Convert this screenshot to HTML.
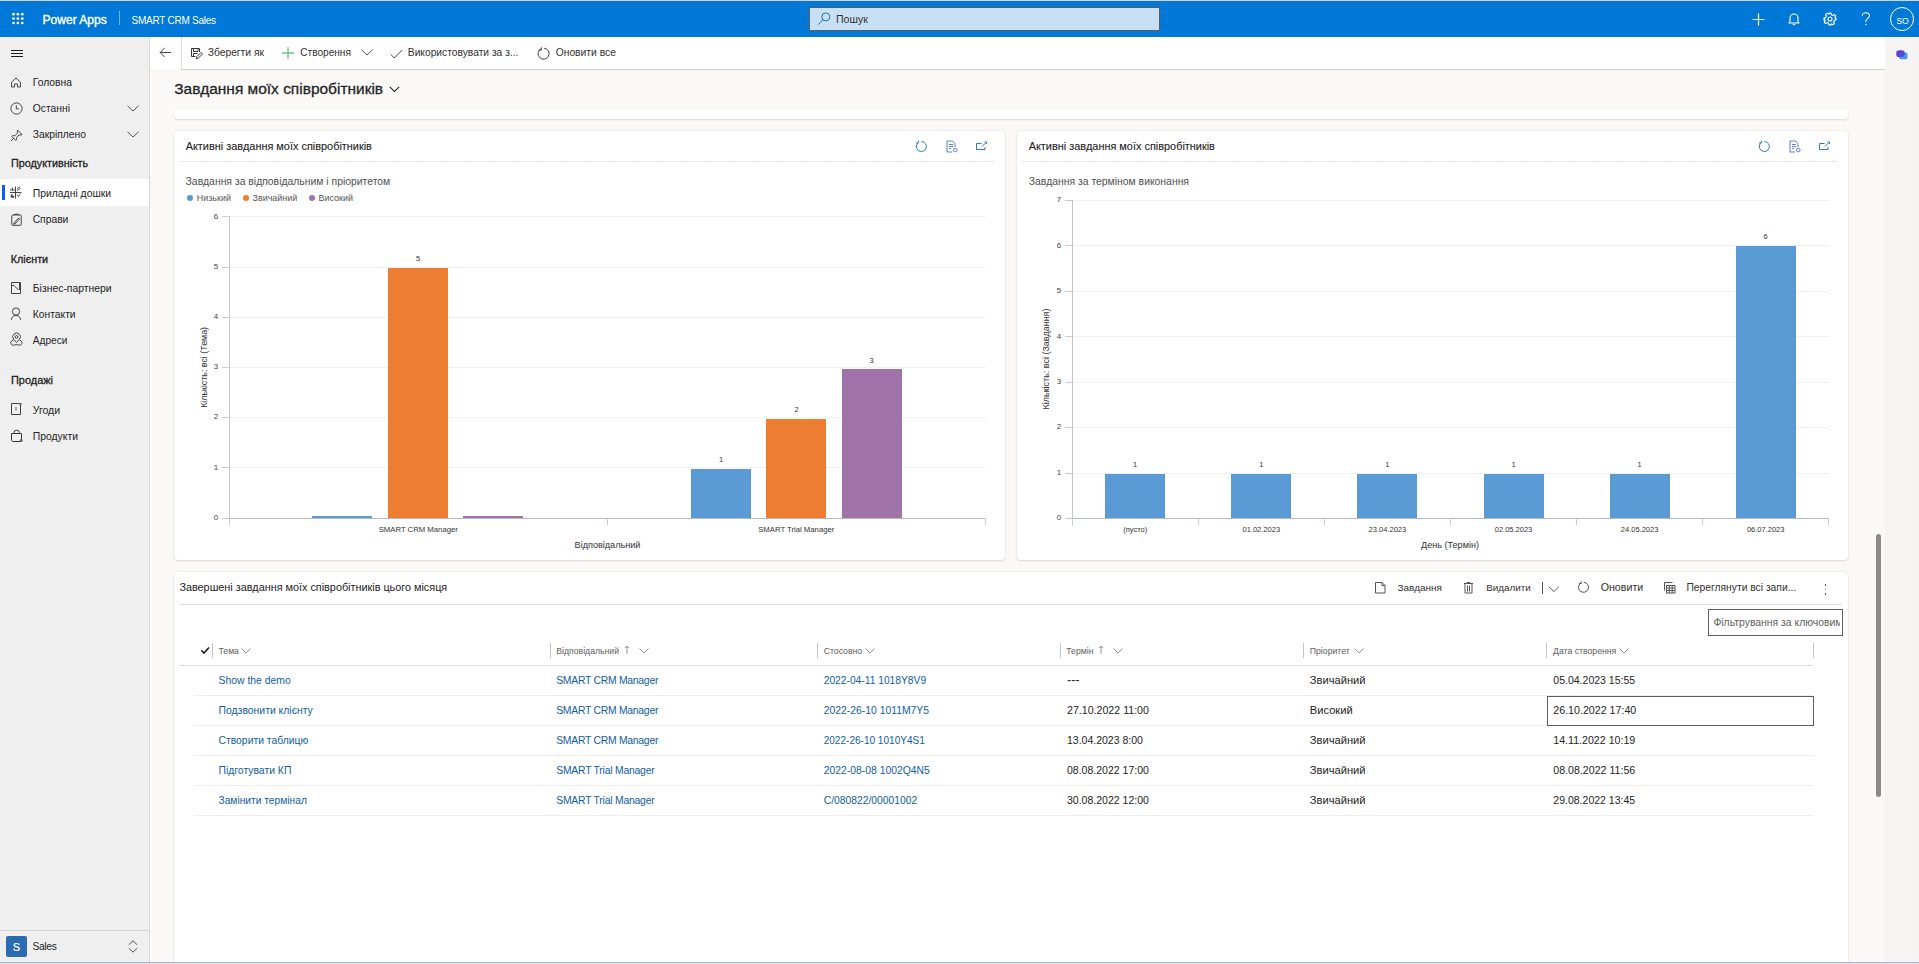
<!DOCTYPE html>
<html><head><meta charset="utf-8"><title>Power Apps</title>
<style>
html,body{margin:0;padding:0;width:1919px;height:964px;overflow:hidden;background:#faf9f8;font-family:"Liberation Sans", sans-serif;}
.r{position:absolute;}
.t{position:absolute;white-space:nowrap;line-height:1;}
svg.r{overflow:visible}
</style></head><body>
<div class="r" style="left:0px;top:0px;width:1919px;height:1px;background:#ddd0c6"></div>
<div class="r" style="left:0px;top:1px;width:1919px;height:36px;background:#0078d7"></div>
<svg class="r" style="left:10px;top:11px;" width="16" height="16" viewBox="0 0 16 16"><circle cx="3.50" cy="3.20" r="1.35" fill="#fff"/><circle cx="3.50" cy="7.60" r="1.35" fill="#fff"/><circle cx="3.50" cy="12.00" r="1.35" fill="#fff"/><circle cx="7.90" cy="3.20" r="1.35" fill="#fff"/><circle cx="7.90" cy="7.60" r="1.35" fill="#fff"/><circle cx="7.90" cy="12.00" r="1.35" fill="#fff"/><circle cx="12.30" cy="3.20" r="1.35" fill="#fff"/><circle cx="12.30" cy="7.60" r="1.35" fill="#fff"/><circle cx="12.30" cy="12.00" r="1.35" fill="#fff"/></svg>
<div class="t" style="left:42.50px;top:14.35px;font-size:12.050px;font-weight:400;color:#fff;-webkit-text-stroke:0.35px #fff">Power Apps</div>
<div class="r" style="left:119px;top:11px;width:1px;height:14px;background:rgba(255,255,255,.45)"></div>
<div class="t" style="left:131.60px;top:16.07px;font-size:9.600px;font-weight:400;color:#fff;font-size:10px;letter-spacing:-0.25px">SMART CRM Sales</div>
<div class="r" style="left:809px;top:7px;width:351px;height:24px;background:#c7e0f4;border:1px solid #5f5b58;box-sizing:border-box"></div>
<svg class="r" style="left:817px;top:11px;" width="14" height="16" viewBox="0 0 14 16"><circle cx="8.8" cy="5.9" r="4" fill="none" stroke="#1f6fc0" stroke-width="1"/><line x1="5.9" y1="8.8" x2="1.3" y2="13.6" stroke="#1f6fc0" stroke-width="1"/></svg>
<div class="t" style="left:836.00px;top:14.23px;font-size:10.600px;font-weight:400;color:#323130;">Пошук</div>
<svg class="r" style="left:1752px;top:13px;" width="13" height="13" viewBox="0 0 13 13"><path d="M6.5 0.5V12.5M0.5 6.5H12.5" stroke="#fff" stroke-width="1.2"/></svg>
<svg class="r" style="left:1788px;top:12px;" width="12" height="14" viewBox="0 0 12 14"><path d="M2 10V6a4 4 0 0 1 8 0v4l1 1H1z" fill="none" stroke="#fff" stroke-width="1.1" stroke-linejoin="round"/><path d="M4.8 12.2a1.3 1.3 0 0 0 2.4 0" fill="#fff" stroke="#fff" stroke-width="0.8"/></svg>
<svg class="r" style="left:1823px;top:12px;" width="14" height="14" viewBox="0 0 14 14"><g fill="none" stroke="#fff" stroke-width="1.1"><circle cx="7" cy="7" r="2"/><path d="M6 1h2l.4 1.7 1.5.7 1.5-.9 1.4 1.4-.9 1.5.7 1.5L13 6v2l-1.7.4-.7 1.5.9 1.5-1.4 1.4-1.5-.9-1.5.7L8 13H6l-.4-1.7-1.5-.7-1.5.9-1.4-1.4.9-1.5-.7-1.5L1 8V6l1.7-.4.7-1.5-.9-1.5 1.4-1.4 1.5.9 1.5-.7z" stroke-linejoin="round"/></g></svg>
<svg class="r" style="left:1861px;top:12px;" width="10" height="14" viewBox="0 0 10 14"><path d="M1.2 3.8C1.2 2 2.8 0.7 4.8 0.7S8.5 2 8.5 3.8c0 1.6-1 2.3-2.2 3.1-.9.6-1.4 1.2-1.4 2.4v.8" fill="none" stroke="#fff" stroke-width="1.1"/><circle cx="4.9" cy="12.6" r="0.75" fill="#fff"/></svg>
<div class="r" style="left:1890px;top:7px;width:24px;height:24px;border:1px solid #fff;border-radius:50%;box-sizing:border-box"></div>
<div class="t" style="left:1602.50px;width:600px;text-align:center;top:17.02px;font-size:8.600px;font-weight:400;color:#fff;letter-spacing:-0.2px">SO</div>
<div class="r" style="left:0px;top:37px;width:149px;height:925px;background:#efefef"></div>
<div class="r" style="left:149px;top:37px;width:1px;height:925px;background:#d6d6d6"></div>
<div class="r" style="left:10.5px;top:50px;width:12px;height:1.2px;background:#1b1a19"></div>
<div class="r" style="left:10.5px;top:53px;width:12px;height:1.2px;background:#1b1a19"></div>
<div class="r" style="left:10.5px;top:56px;width:12px;height:1.2px;background:#1b1a19"></div>
<div class="t" style="left:32.80px;top:77.88px;font-size:10.300px;font-weight:400;color:#242424;">Головна</div>
<svg class="r" style="left:10px;top:76px;" width="12" height="12" viewBox="0 0 12 12"><path d="M1.5 6.2L6 2l4.5 4.2V11H7.5V8h-3v3H1.5z" fill="none" stroke="#444" stroke-width="1" stroke-linejoin="round"/></svg>
<div class="t" style="left:32.80px;top:103.58px;font-size:10.300px;font-weight:400;color:#242424;">Останні</div>
<svg class="r" style="left:9.5px;top:101.5px;" width="13" height="13" viewBox="0 0 13 13"><circle cx="6.5" cy="6.5" r="5.6" fill="none" stroke="#444" stroke-width="1"/><path d="M6.3 3.3V6.9H9" fill="none" stroke="#444" stroke-width="1"/></svg>
<svg class="r" style="left:126.5px;top:104.5px;" width="12" height="7" viewBox="0 0 12 7"><path d="M0.5 0.8L6 6l5.5-5.2" fill="none" stroke="#555" stroke-width="1"/></svg>
<div class="t" style="left:32.80px;top:129.58px;font-size:10.300px;font-weight:400;color:#242424;">Закріплено</div>
<svg class="r" style="left:9.5px;top:128.5px;" width="13" height="13" viewBox="0 0 13 13"><path d="M7.5 1l4.5 4.5-1 .5-2 0-2.5 2.5.3 2-1 1L1.8 7.5l1-1 2 .3L7.3 4.3V2.3z" fill="none" stroke="#444" stroke-width="1" stroke-linejoin="round"/><path d="M4 9L1 12" stroke="#444" stroke-width="1"/></svg>
<svg class="r" style="left:126.5px;top:130.5px;" width="12" height="7" viewBox="0 0 12 7"><path d="M0.5 0.8L6 6l5.5-5.2" fill="none" stroke="#555" stroke-width="1"/></svg>
<div class="t" style="left:11.00px;top:158.35px;font-size:10.810px;font-weight:400;color:#242424;-webkit-text-stroke:0.3px #242424">Продуктивність</div>
<div class="r" style="left:0px;top:179px;width:149px;height:27px;background:#fff"></div>
<div class="r" style="left:2px;top:185px;width:3px;height:15px;background:#0f5bff"></div>
<svg class="r" style="left:10px;top:186px;" width="12" height="13" viewBox="0 0 12 13"><g fill="none" stroke="#444" stroke-width="1"><path d="M0 6.5H11.5M5.5 0.5V12.5"/><path d="M1 5V2.5M2.5 5V1.5M4 5V3" stroke-width="0.9"/><path d="M7 4.5l3.5-2M7 2.5l3-1.5" stroke-width="0.9"/><path d="M7 8.5l1.5 2 2-3" stroke-width="0.9"/></g><path d="M2.5 8a2 2 0 1 0 2 2h-2z" fill="#444"/></svg>
<div class="t" style="left:32.70px;top:188.90px;font-size:10.400px;font-weight:400;color:#242424;">Приладні дошки</div>
<svg class="r" style="left:10.5px;top:212.5px;" width="11" height="13" viewBox="0 0 11 13"><g stroke="#444" stroke-width="1" fill="none"><rect x="0.8" y="2" width="9.4" height="10.3" rx="0.8"/><path d="M3.5 2.3V1.2h4v1.1"/><path d="M3 10l4.5-5 1 1L4 11l-1.2.2z"/></g></svg>
<div class="t" style="left:32.70px;top:214.78px;font-size:10.300px;font-weight:400;color:#242424;">Справи</div>
<div class="t" style="left:10.80px;top:254.49px;font-size:10.760px;font-weight:400;color:#242424;-webkit-text-stroke:0.3px #242424">Клієнти</div>
<svg class="r" style="left:10px;top:281px;" width="12" height="14" viewBox="0 0 12 14"><g stroke="#444" stroke-width="1" fill="none"><path d="M1.5 1.5h9v11h-9z"/><path d="M1.5 4.5h2.5l4.5 4.5M9.5 2v7"/></g></svg>
<div class="t" style="left:32.80px;top:283.90px;font-size:10.400px;font-weight:400;color:#242424;">Бізнес-партнери</div>
<svg class="r" style="left:10px;top:306px;" width="12" height="15" viewBox="0 0 12 15"><g stroke="#444" stroke-width="1" fill="none"><circle cx="6" cy="5.5" r="3.6"/><path d="M1.3 13.8c.4-2.6 2-4.3 4.7-4.3s4.3 1.7 4.7 4.3"/></g></svg>
<div class="t" style="left:32.80px;top:309.58px;font-size:10.300px;font-weight:400;color:#242424;">Контакти</div>
<svg class="r" style="left:9.5px;top:332px;" width="13" height="15" viewBox="0 0 13 15"><g stroke="#444" stroke-width="1" fill="none"><path d="M6.5 10.5L3.6 7.3A3.8 3.8 0 1 1 9.4 7.3z"/><circle cx="6.5" cy="5" r="1.4"/><path d="M3.5 7.8L1.3 9.2C.5 10.2.8 13 2.5 13.2c1.5.2 2.5-.6 4-.6s3 .8 4 .5c1.6-.4 1.8-3 1-3.9L9.5 7.8"/></g></svg>
<div class="t" style="left:32.80px;top:336.05px;font-size:10.100px;font-weight:400;color:#242424;">Адреси</div>
<div class="t" style="left:11.00px;top:374.74px;font-size:10.940px;font-weight:400;color:#242424;-webkit-text-stroke:0.3px #242424">Продажі</div>
<svg class="r" style="left:10px;top:402px;" width="12" height="14" viewBox="0 0 12 14"><g stroke="#444" stroke-width="1" fill="none"><path d="M1.5 1.5h9v11h-9z"/><path d="M6 5v3.5" stroke-width="0.8"/></g><path d="M9.5 1h2v2.5h-2z" fill="#666"/></svg>
<div class="t" style="left:32.70px;top:404.71px;font-size:10.500px;font-weight:400;color:#242424;">Угоди</div>
<svg class="r" style="left:9.5px;top:429px;" width="14" height="14" viewBox="0 0 14 14"><g stroke="#333" stroke-width="1" fill="none"><path d="M1.5 4.5h10v6.5c0 .8-.6 1.5-1.5 1.5H3c-.9 0-1.5-.7-1.5-1.5z"/><path d="M4 5V3.7a2.7 2.5 0 0 1 5.4 0V5"/></g><circle cx="11.2" cy="11.5" r="1.5" fill="#666"/></svg>
<div class="t" style="left:32.70px;top:431.80px;font-size:10.400px;font-weight:400;color:#242424;">Продукти</div>
<div class="r" style="left:0px;top:930px;width:149px;height:1px;background:#d6d6d6"></div>
<div class="r" style="left:6px;top:936px;width:21px;height:21px;background:#2b6cb0;border-radius:2px"></div>
<div class="t" style="left:-283.50px;width:600px;text-align:center;top:941.99px;font-size:11.000px;font-weight:400;color:#fff;-webkit-text-stroke:0.2px #fff">S</div>
<div class="t" style="left:32.50px;top:942.26px;font-size:9.500px;font-weight:400;color:#242424;font-size:10.2px;letter-spacing:-0.3px">Sales</div>
<svg class="r" style="left:127.5px;top:939.5px;" width="10" height="13" viewBox="0 0 10 13"><path d="M0.8 4.8L5 .8l4.2 4M0.8 8.2L5 12.2l4.2-4" fill="none" stroke="#555" stroke-width="1"/></svg>
<div class="r" style="left:150px;top:37px;width:1735px;height:32px;background:#fff"></div>
<div class="r" style="left:181px;top:37px;width:1px;height:32px;background:#e1dfdd"></div>
<div class="r" style="left:181px;top:69px;width:1704px;height:1px;background:#d2d0ce"></div>
<div class="r" style="left:150px;top:70px;width:1735px;height:892px;background:#faf9f8"></div>
<div class="r" style="left:1885px;top:37px;width:34px;height:925px;background:repeating-conic-gradient(#f9f8f7 0 25%,#f2f1f0 0 50%) 0 0/2px 2px"></div>
<svg class="r" style="left:1896px;top:50px;" width="12" height="10" viewBox="0 0 12 10"><rect x="0.5" y="0.5" width="8" height="6.5" rx="2" fill="#5b3fd6"/><rect x="3" y="2.5" width="8.5" height="6.8" rx="2" fill="#3a8ff0" opacity=".9"/><rect x="0.5" y="0.5" width="8" height="6.5" rx="2" fill="#5b3fd6" opacity=".85"/></svg>
<svg class="r" style="left:159px;top:47px;" width="13" height="11" viewBox="0 0 13 11"><path d="M12 5.5H1.2M5.8 0.8L1.2 5.5l4.6 4.7" fill="none" stroke="#484644" stroke-width="1"/></svg>
<svg class="r" style="left:190px;top:47px;" width="14" height="13" viewBox="0 0 14 13"><g fill="none" stroke="#3b3a39" stroke-width="1"><path d="M5.5 9.5H1.5V1.5h8V5"/><path d="M3.5 1.5v3h4.5v-3"/><path d="M3.5 9.5V6.5h4"/><path d="M6.3 11.7l.5-2 4.3-4.3 1.5 1.5-4.3 4.3z"/></g></svg>
<div class="t" style="left:207.70px;top:48.08px;font-size:10.300px;font-weight:400;color:#323130;">Зберегти як</div>
<svg class="r" style="left:281px;top:46px;" width="14" height="14" viewBox="0 0 14 14"><path d="M7 1v12M1 7h12" stroke="#74c28c" stroke-width="1.3"/></svg>
<div class="t" style="left:300.30px;top:48.25px;font-size:10.100px;font-weight:400;color:#323130;">Створення</div>
<svg class="r" style="left:360.5px;top:48.5px;" width="12" height="7" viewBox="0 0 12 7"><path d="M0.5 0.8L6 6l5.5-5.2" fill="none" stroke="#555" stroke-width="1"/></svg>
<svg class="r" style="left:389.5px;top:48.5px;" width="13" height="10" viewBox="0 0 13 10"><path d="M0.8 5.5l3.5 3.5L12.2 1" fill="none" stroke="#444" stroke-width="1"/></svg>
<div class="t" style="left:407.80px;top:48.11px;font-size:10.260px;font-weight:400;color:#323130;">Використовувати за з...</div>
<svg class="r" style="left:537px;top:47px;" width="14" height="13" viewBox="0 0 14 13"><path d="M4.5 1.6A5.5 5.5 0 1 0 7 1.2" fill="none" stroke="#444" stroke-width="1"/><path d="M4.3 0.3v2.8H1.8" fill="none" stroke="#444" stroke-width="1"/></svg>
<div class="t" style="left:555.70px;top:48.08px;font-size:10.300px;font-weight:400;color:#323130;">Оновити все</div>
<div class="r" style="left:174px;top:100px;width:1674px;height:19px;background:#fff;border-radius:0 0 4px 4px;box-shadow:0 1px 2px rgba(0,0,0,.14)"></div>
<div class="r" style="left:150px;top:70px;width:1735px;height:41px;background:#faf9f8"></div>
<div class="t" style="left:174.20px;top:81.20px;font-size:15.480px;font-weight:400;color:#242424;-webkit-text-stroke:0.3px #242424">Завдання моїх співробітників</div>
<svg class="r" style="left:388.5px;top:86px;" width="11" height="7" viewBox="0 0 11 7"><path d="M0.8 0.8L5.5 5.5l4.7-4.7" fill="none" stroke="#323130" stroke-width="1.2"/></svg>
<div class="r" style="left:174px;top:131px;width:831px;height:429px;background:#fff;border-radius:4px;box-shadow:0 0 2px rgba(0,0,0,.12),0 1px 2px rgba(0,0,0,.10)"></div>
<div class="r" style="left:1017px;top:131px;width:831px;height:429px;background:#fff;border-radius:4px;box-shadow:0 0 2px rgba(0,0,0,.12),0 1px 2px rgba(0,0,0,.10)"></div>
<div class="t" style="left:185.70px;top:140.76px;font-size:10.910px;font-weight:400;color:#242424;-webkit-text-stroke:0.1px #242424">Активні завдання моїх співробітників</div>
<div class="r" style="left:179px;top:161px;width:816px;height:1px;background:repeating-linear-gradient(90deg,#e4e4e4 0 2px,#f4f4f4 2px 3px)"></div>
<div class="t" style="left:1028.70px;top:140.76px;font-size:10.910px;font-weight:400;color:#242424;-webkit-text-stroke:0.1px #242424">Активні завдання моїх співробітників</div>
<div class="r" style="left:1022px;top:161px;width:816px;height:1px;background:repeating-linear-gradient(90deg,#e4e4e4 0 2px,#f4f4f4 2px 3px)"></div>
<svg class="r" style="left:915px;top:140px;" width="13" height="13" viewBox="0 0 13 13"><path d="M3.8 2.2A5 5 0 1 0 6.5 1.5" fill="none" stroke="#2b79d0" stroke-width="1"/><path d="M3.4 0.6v2.4H1" fill="none" stroke="#2b79d0" stroke-width="1"/></svg>
<svg class="r" style="left:946px;top:140px;" width="13" height="13" viewBox="0 0 13 13"><g fill="none" stroke="#5a7fd6" stroke-width="1"><path d="M1 1h5.5L9 3.5V7M1 1v11h5"/><path d="M3 4.5h4M3 6.5h4M3 8.5h2"/><circle cx="9.3" cy="10" r="1.8"/></g></svg>
<svg class="r" style="left:975px;top:141px;" width="13" height="10" viewBox="0 0 13 10"><g fill="none" stroke="#2b79d0" stroke-width="1"><path d="M6.5 2.5H1.5v6h8.5V6"/><path d="M7 5.5l4-4M9.5 1h2v2"/></g></svg>
<svg class="r" style="left:1758px;top:140px;" width="13" height="13" viewBox="0 0 13 13"><path d="M3.8 2.2A5 5 0 1 0 6.5 1.5" fill="none" stroke="#2b79d0" stroke-width="1"/><path d="M3.4 0.6v2.4H1" fill="none" stroke="#2b79d0" stroke-width="1"/></svg>
<svg class="r" style="left:1789px;top:140px;" width="13" height="13" viewBox="0 0 13 13"><g fill="none" stroke="#5a7fd6" stroke-width="1"><path d="M1 1h5.5L9 3.5V7M1 1v11h5"/><path d="M3 4.5h4M3 6.5h4M3 8.5h2"/><circle cx="9.3" cy="10" r="1.8"/></g></svg>
<svg class="r" style="left:1818px;top:141px;" width="13" height="10" viewBox="0 0 13 10"><g fill="none" stroke="#2b79d0" stroke-width="1"><path d="M6.5 2.5H1.5v6h8.5V6"/><path d="M7 5.5l4-4M9.5 1h2v2"/></g></svg>
<div class="t" style="left:185.60px;top:177.00px;font-size:10.400px;font-weight:400;color:#505050;">Завдання за відповідальним і пріоритетом</div>
<div class="r" style="left:187px;top:195px;width:6px;height:6px;background:#5b9bd5;border-radius:50%"></div>
<div class="t" style="left:196.80px;top:194.02px;font-size:8.960px;font-weight:400;color:#555;">Низький</div>
<div class="r" style="left:243px;top:195px;width:6px;height:6px;background:#ed7d31;border-radius:50%"></div>
<div class="t" style="left:252.50px;top:194.02px;font-size:8.960px;font-weight:400;color:#555;">Звичайний</div>
<div class="r" style="left:309px;top:195px;width:6px;height:6px;background:#a074a8;border-radius:50%"></div>
<div class="t" style="left:318.50px;top:194.02px;font-size:8.960px;font-weight:400;color:#555;">Високий</div>
<div class="r" style="left:222px;top:518px;width:7px;height:1px;background:#c9ccd3"></div>
<div class="t" style="left:-84.00px;width:600px;text-align:center;top:513.83px;font-size:8.000px;font-weight:400;color:#444;">0</div>
<div class="r" style="left:230px;top:467px;width:756px;height:1px;background:#eff0f4"></div>
<div class="r" style="left:222px;top:467px;width:7px;height:1px;background:#c9ccd3"></div>
<div class="t" style="left:-84.00px;width:600px;text-align:center;top:463.66px;font-size:8.000px;font-weight:400;color:#444;">1</div>
<div class="r" style="left:230px;top:417px;width:756px;height:1px;background:#eff0f4"></div>
<div class="r" style="left:222px;top:417px;width:7px;height:1px;background:#c9ccd3"></div>
<div class="t" style="left:-84.00px;width:600px;text-align:center;top:413.49px;font-size:8.000px;font-weight:400;color:#444;">2</div>
<div class="r" style="left:230px;top:367px;width:756px;height:1px;background:#eff0f4"></div>
<div class="r" style="left:222px;top:367px;width:7px;height:1px;background:#c9ccd3"></div>
<div class="t" style="left:-84.00px;width:600px;text-align:center;top:363.32px;font-size:8.000px;font-weight:400;color:#444;">3</div>
<div class="r" style="left:230px;top:317px;width:756px;height:1px;background:#eff0f4"></div>
<div class="r" style="left:222px;top:317px;width:7px;height:1px;background:#c9ccd3"></div>
<div class="t" style="left:-84.00px;width:600px;text-align:center;top:313.15px;font-size:8.000px;font-weight:400;color:#444;">4</div>
<div class="r" style="left:230px;top:267px;width:756px;height:1px;background:#eff0f4"></div>
<div class="r" style="left:222px;top:267px;width:7px;height:1px;background:#c9ccd3"></div>
<div class="t" style="left:-84.00px;width:600px;text-align:center;top:262.98px;font-size:8.000px;font-weight:400;color:#444;">5</div>
<div class="r" style="left:230px;top:216px;width:756px;height:1px;background:#eff0f4"></div>
<div class="r" style="left:222px;top:216px;width:7px;height:1px;background:#c9ccd3"></div>
<div class="t" style="left:-84.00px;width:600px;text-align:center;top:212.81px;font-size:8.000px;font-weight:400;color:#444;">6</div>
<div class="r" style="left:229px;top:216px;width:1px;height:309px;background:#c3c8d0"></div>
<div class="r" style="left:229px;top:518px;width:757px;height:1px;background:#b4bac4"></div>
<div class="r" style="left:229px;top:518px;width:1px;height:7px;background:#c9ccd3"></div>
<div class="r" style="left:607px;top:518px;width:1px;height:7px;background:#c9ccd3"></div>
<div class="r" style="left:985px;top:518px;width:1px;height:7px;background:#c9ccd3"></div>
<div class="r" style="left:312px;top:516px;width:60px;height:2px;background:#5b9bd5"></div>
<div class="r" style="left:388px;top:268px;width:60px;height:250px;background:#ed7d31"></div>
<div class="r" style="left:463px;top:516px;width:60px;height:2px;background:#a074a8"></div>
<div class="r" style="left:691px;top:469px;width:60px;height:49px;background:#5b9bd5"></div>
<div class="r" style="left:766px;top:419px;width:60px;height:99px;background:#ed7d31"></div>
<div class="r" style="left:842px;top:369px;width:60px;height:149px;background:#a074a8"></div>
<div class="t" style="left:118.00px;width:600px;text-align:center;top:255.45px;font-size:7.500px;font-weight:400;color:#333;">5</div>
<div class="t" style="left:421.00px;width:600px;text-align:center;top:456.45px;font-size:7.500px;font-weight:400;color:#333;">1</div>
<div class="t" style="left:496.50px;width:600px;text-align:center;top:405.95px;font-size:7.500px;font-weight:400;color:#333;">2</div>
<div class="t" style="left:571.50px;width:600px;text-align:center;top:356.95px;font-size:7.500px;font-weight:400;color:#333;">3</div>
<div class="t" style="left:118.30px;width:600px;text-align:center;top:526.25px;font-size:7.740px;font-weight:400;color:#333;">SMART CRM Manager</div>
<div class="t" style="left:496.30px;width:600px;text-align:center;top:526.25px;font-size:7.740px;font-weight:400;color:#333;">SMART Trial Manager</div>
<div class="t" style="left:307.50px;width:600px;text-align:center;top:540.70px;font-size:9.100px;font-weight:400;color:#333;">Відповідальний</div>
<div class="t" style="left:154px;top:363px;width:100px;text-align:center;font-size:8.86px;color:#333;transform:rotate(-90deg);">Кількість: всі (Тема)</div>
<div class="t" style="left:1028.70px;top:177.00px;font-size:10.400px;font-weight:400;color:#505050;">Завдання за терміном виконання</div>
<div class="r" style="left:1065px;top:518px;width:7px;height:1px;background:#c9ccd3"></div>
<div class="t" style="left:759.00px;width:600px;text-align:center;top:514.33px;font-size:8.000px;font-weight:400;color:#444;">0</div>
<div class="r" style="left:1073px;top:473px;width:756px;height:1px;background:#eff0f4"></div>
<div class="r" style="left:1065px;top:473px;width:7px;height:1px;background:#c9ccd3"></div>
<div class="t" style="left:759.00px;width:600px;text-align:center;top:468.90px;font-size:8.000px;font-weight:400;color:#444;">1</div>
<div class="r" style="left:1073px;top:427px;width:756px;height:1px;background:#eff0f4"></div>
<div class="r" style="left:1065px;top:427px;width:7px;height:1px;background:#c9ccd3"></div>
<div class="t" style="left:759.00px;width:600px;text-align:center;top:423.47px;font-size:8.000px;font-weight:400;color:#444;">2</div>
<div class="r" style="left:1073px;top:382px;width:756px;height:1px;background:#eff0f4"></div>
<div class="r" style="left:1065px;top:382px;width:7px;height:1px;background:#c9ccd3"></div>
<div class="t" style="left:759.00px;width:600px;text-align:center;top:378.04px;font-size:8.000px;font-weight:400;color:#444;">3</div>
<div class="r" style="left:1073px;top:336px;width:756px;height:1px;background:#eff0f4"></div>
<div class="r" style="left:1065px;top:336px;width:7px;height:1px;background:#c9ccd3"></div>
<div class="t" style="left:759.00px;width:600px;text-align:center;top:332.61px;font-size:8.000px;font-weight:400;color:#444;">4</div>
<div class="r" style="left:1073px;top:291px;width:756px;height:1px;background:#eff0f4"></div>
<div class="r" style="left:1065px;top:291px;width:7px;height:1px;background:#c9ccd3"></div>
<div class="t" style="left:759.00px;width:600px;text-align:center;top:287.18px;font-size:8.000px;font-weight:400;color:#444;">5</div>
<div class="r" style="left:1073px;top:245px;width:756px;height:1px;background:#eff0f4"></div>
<div class="r" style="left:1065px;top:245px;width:7px;height:1px;background:#c9ccd3"></div>
<div class="t" style="left:759.00px;width:600px;text-align:center;top:241.75px;font-size:8.000px;font-weight:400;color:#444;">6</div>
<div class="r" style="left:1073px;top:200px;width:756px;height:1px;background:#eff0f4"></div>
<div class="r" style="left:1065px;top:200px;width:7px;height:1px;background:#c9ccd3"></div>
<div class="t" style="left:759.00px;width:600px;text-align:center;top:196.32px;font-size:8.000px;font-weight:400;color:#444;">7</div>
<div class="r" style="left:1072px;top:200px;width:1px;height:326px;background:#c3c8d0"></div>
<div class="r" style="left:1072px;top:518px;width:757px;height:1px;background:#b4bac4"></div>
<div class="r" style="left:1072px;top:518px;width:1px;height:7px;background:#c9ccd3"></div>
<div class="r" style="left:1198px;top:518px;width:1px;height:7px;background:#c9ccd3"></div>
<div class="r" style="left:1324px;top:518px;width:1px;height:7px;background:#c9ccd3"></div>
<div class="r" style="left:1450px;top:518px;width:1px;height:7px;background:#c9ccd3"></div>
<div class="r" style="left:1576px;top:518px;width:1px;height:7px;background:#c9ccd3"></div>
<div class="r" style="left:1702px;top:518px;width:1px;height:7px;background:#c9ccd3"></div>
<div class="r" style="left:1828px;top:518px;width:1px;height:7px;background:#c9ccd3"></div>
<div class="r" style="left:1105px;top:474px;width:60px;height:44px;background:#5b9bd5"></div>
<div class="t" style="left:835.20px;width:600px;text-align:center;top:460.52px;font-size:7.500px;font-weight:400;color:#333;">1</div>
<div class="t" style="left:835.20px;width:600px;text-align:center;top:526.45px;font-size:7.500px;font-weight:400;color:#333;">(пусто)</div>
<div class="r" style="left:1231px;top:474px;width:60px;height:44px;background:#5b9bd5"></div>
<div class="t" style="left:961.30px;width:600px;text-align:center;top:460.52px;font-size:7.500px;font-weight:400;color:#333;">1</div>
<div class="t" style="left:961.30px;width:600px;text-align:center;top:526.45px;font-size:7.500px;font-weight:400;color:#333;">01.02.2023</div>
<div class="r" style="left:1357px;top:474px;width:60px;height:44px;background:#5b9bd5"></div>
<div class="t" style="left:1087.40px;width:600px;text-align:center;top:460.52px;font-size:7.500px;font-weight:400;color:#333;">1</div>
<div class="t" style="left:1087.40px;width:600px;text-align:center;top:526.45px;font-size:7.500px;font-weight:400;color:#333;">23.04.2023</div>
<div class="r" style="left:1484px;top:474px;width:60px;height:44px;background:#5b9bd5"></div>
<div class="t" style="left:1213.50px;width:600px;text-align:center;top:460.52px;font-size:7.500px;font-weight:400;color:#333;">1</div>
<div class="t" style="left:1213.50px;width:600px;text-align:center;top:526.45px;font-size:7.500px;font-weight:400;color:#333;">02.05.2023</div>
<div class="r" style="left:1610px;top:474px;width:60px;height:44px;background:#5b9bd5"></div>
<div class="t" style="left:1339.60px;width:600px;text-align:center;top:460.52px;font-size:7.500px;font-weight:400;color:#333;">1</div>
<div class="t" style="left:1339.60px;width:600px;text-align:center;top:526.45px;font-size:7.500px;font-weight:400;color:#333;">24.05.2023</div>
<div class="r" style="left:1736px;top:246px;width:60px;height:272px;background:#5b9bd5"></div>
<div class="t" style="left:1465.70px;width:600px;text-align:center;top:233.37px;font-size:7.500px;font-weight:400;color:#333;">6</div>
<div class="t" style="left:1465.70px;width:600px;text-align:center;top:526.45px;font-size:7.500px;font-weight:400;color:#333;">06.07.2023</div>
<div class="t" style="left:1150.00px;width:600px;text-align:center;top:540.70px;font-size:9.100px;font-weight:400;color:#333;">День (Термін)</div>
<div class="t" style="left:996px;top:355.3px;width:100px;text-align:center;font-size:8.97px;color:#333;transform:rotate(-90deg);">Кількість: всі (Завдання)</div>
<div class="r" style="left:174px;top:572px;width:1674px;height:390px;background:#fff;border-radius:4px 4px 0 0;box-shadow:0 0 2px rgba(0,0,0,.12),0 1px 2px rgba(0,0,0,.10)"></div>
<div class="t" style="left:179.40px;top:581.93px;font-size:10.830px;font-weight:400;color:#242424;">Завершені завдання моїх співробітників цього місяця</div>
<div class="r" style="left:179px;top:604px;width:1663px;height:1px;background:#e1dfdd"></div>
<svg class="r" style="left:1374px;top:581px;" width="13" height="13" viewBox="0 0 13 13"><g fill="none" stroke="#555" stroke-width="1"><path d="M1.5 1.5h6.5l3 3v7.5h-9.5z"/><path d="M8 1.5v3h3"/></g></svg>
<div class="t" style="left:1397.50px;top:582.97px;font-size:9.960px;font-weight:400;color:#323130;">Завдання</div>
<svg class="r" style="left:1463px;top:581px;" width="11" height="13" viewBox="0 0 11 13"><g fill="none" stroke="#555" stroke-width="1"><path d="M1 2.5h9M4 2.5V1.5h3v1"/><path d="M2 2.5v9.5h7V2.5"/><path d="M4.5 4.5v6M6.5 4.5v6"/></g></svg>
<div class="t" style="left:1486.20px;top:583.02px;font-size:9.900px;font-weight:400;color:#323130;">Видалити</div>
<div class="r" style="left:1542px;top:582px;width:1px;height:12px;background:#555"></div>
<svg class="r" style="left:1547.5px;top:586px;" width="12" height="7" viewBox="0 0 12 7"><path d="M0.8 0.8L5.9 5.5l4.9-4.7" fill="none" stroke="#555" stroke-width="1"/></svg>
<svg class="r" style="left:1577px;top:581px;" width="14" height="14" viewBox="0 0 14 14"><path d="M4.3 1.8A5 5 0 1 0 6.8 1.3" fill="none" stroke="#555" stroke-width="1"/><path d="M4.2 0.3v2.3H1.9" fill="none" stroke="#555" stroke-width="1"/></svg>
<div class="t" style="left:1600.70px;top:582.37px;font-size:10.670px;font-weight:400;color:#323130;">Оновити</div>
<svg class="r" style="left:1663px;top:581px;" width="13" height="13" viewBox="0 0 13 13"><g fill="none" stroke="#555" stroke-width="1"><path d="M1.5 1.5h8"/><rect x="3.5" y="4.5" width="8.5" height="7.5"/><path d="M3.5 7h8.5M3.5 9.5h8.5M6.3 4.5v7.5M9.2 4.5v7.5M1.5 1.5v8"/></g></svg>
<div class="t" style="left:1686.40px;top:582.67px;font-size:10.310px;font-weight:400;color:#323130;">Переглянути всі запи...</div>
<div class="r" style="left:1824.5px;top:584px;width:1.5px;height:1.5px;background:#444;border-radius:50%"></div>
<div class="r" style="left:1824.5px;top:588.5px;width:1.5px;height:1.5px;background:#444;border-radius:50%"></div>
<div class="r" style="left:1824.5px;top:593px;width:1.5px;height:1.5px;background:#444;border-radius:50%"></div>
<div class="r" style="left:1708px;top:609px;width:135px;height:27px;border:1px solid #605e5c;box-sizing:border-box;background:#fff;overflow:hidden"></div>
<div class="t" style="left:1713.4px;top:618.1px;width:127px;overflow:hidden;font-size:10.4px;color:#605e5c;white-space:nowrap">Фільтрування за ключовим словом</div>
<svg class="r" style="left:200px;top:646px;" width="11" height="9" viewBox="0 0 11 9"><path d="M1.3 4.3l2.6 2.8 5.1-5.5" fill="none" stroke="#1b1a19" stroke-width="1.5"/></svg>
<div class="r" style="left:212px;top:643px;width:1px;height:15px;background:#c8c6c4"></div>
<div class="t" style="left:218.50px;top:647.44px;font-size:8.700px;font-weight:400;color:#605e5c;">Тема</div>
<svg class="r" style="left:240.5px;top:648px;" width="10" height="6" viewBox="0 0 10 6"><path d="M0.5 0.5L5 5l4.5-4.5" fill="none" stroke="#8a8886" stroke-width="0.9"/></svg>
<div class="r" style="left:550px;top:643px;width:1px;height:15px;background:#c8c6c4"></div>
<div class="t" style="left:556.20px;top:647.44px;font-size:8.700px;font-weight:400;color:#605e5c;">Відповідальний</div>
<svg class="r" style="left:624.3000000000001px;top:645px;" width="6" height="10" viewBox="0 0 6 10"><path d="M3 9V1M0.8 3.2L3 1l2.2 2.2" fill="none" stroke="#8a8886" stroke-width="0.9"/></svg>
<svg class="r" style="left:639.3000000000001px;top:648px;" width="10" height="6" viewBox="0 0 10 6"><path d="M0.5 0.5L5 5l4.5-4.5" fill="none" stroke="#8a8886" stroke-width="0.9"/></svg>
<div class="r" style="left:817px;top:643px;width:1px;height:15px;background:#c8c6c4"></div>
<div class="t" style="left:823.70px;top:647.44px;font-size:8.700px;font-weight:400;color:#605e5c;">Стосовно</div>
<svg class="r" style="left:864.7px;top:648px;" width="10" height="6" viewBox="0 0 10 6"><path d="M0.5 0.5L5 5l4.5-4.5" fill="none" stroke="#8a8886" stroke-width="0.9"/></svg>
<div class="r" style="left:1060px;top:643px;width:1px;height:15px;background:#c8c6c4"></div>
<div class="t" style="left:1066.30px;top:647.44px;font-size:8.700px;font-weight:400;color:#605e5c;">Термін</div>
<svg class="r" style="left:1098.3px;top:645px;" width="6" height="10" viewBox="0 0 6 10"><path d="M3 9V1M0.8 3.2L3 1l2.2 2.2" fill="none" stroke="#8a8886" stroke-width="0.9"/></svg>
<svg class="r" style="left:1113.3px;top:648px;" width="10" height="6" viewBox="0 0 10 6"><path d="M0.5 0.5L5 5l4.5-4.5" fill="none" stroke="#8a8886" stroke-width="0.9"/></svg>
<div class="r" style="left:1303px;top:643px;width:1px;height:15px;background:#c8c6c4"></div>
<div class="t" style="left:1309.80px;top:647.44px;font-size:8.700px;font-weight:400;color:#605e5c;">Пріоритет</div>
<svg class="r" style="left:1353.8px;top:648px;" width="10" height="6" viewBox="0 0 10 6"><path d="M0.5 0.5L5 5l4.5-4.5" fill="none" stroke="#8a8886" stroke-width="0.9"/></svg>
<div class="r" style="left:1546px;top:643px;width:1px;height:15px;background:#c8c6c4"></div>
<div class="t" style="left:1553.00px;top:647.44px;font-size:8.700px;font-weight:400;color:#605e5c;">Дата створення</div>
<svg class="r" style="left:1619.3px;top:648px;" width="10" height="6" viewBox="0 0 10 6"><path d="M0.5 0.5L5 5l4.5-4.5" fill="none" stroke="#8a8886" stroke-width="0.9"/></svg>
<div class="r" style="left:1813px;top:643px;width:1px;height:15px;background:#c8c6c4"></div>
<div class="r" style="left:179px;top:665px;width:1634px;height:1px;background:#e1dfdd"></div>
<div class="t" style="left:218.50px;top:675.99px;font-size:10.405px;font-weight:400;color:#115ea3;">Show the demo</div>
<div class="t" style="left:556.20px;top:676.00px;font-size:10.400px;font-weight:400;color:#115ea3;letter-spacing:-0.267px;">SMART CRM Manager</div>
<div class="t" style="left:823.70px;top:676.11px;font-size:10.260px;font-weight:400;color:#115ea3;">2022-04-11 1018Y8V9</div>
<div class="t" style="left:1067.00px;top:673.61px;font-size:12.512px;font-weight:400;color:#242424;">---</div>
<div class="t" style="left:1309.80px;top:675.35px;font-size:11.162px;font-weight:400;color:#242424;">Звичайний</div>
<div class="t" style="left:1553.30px;top:675.28px;font-size:10.533px;font-weight:400;color:#242424;">05.04.2023 15:55</div>
<div class="r" style="left:194px;top:695px;width:1619px;height:1px;background:#f0efee"></div>
<div class="t" style="left:218.50px;top:705.98px;font-size:10.417px;font-weight:400;color:#115ea3;">Подзвонити клієнту</div>
<div class="t" style="left:556.20px;top:706.00px;font-size:10.400px;font-weight:400;color:#115ea3;letter-spacing:-0.267px;">SMART CRM Manager</div>
<div class="t" style="left:823.70px;top:706.01px;font-size:10.388px;font-weight:400;color:#115ea3;">2022-26-10 1011M7Y5</div>
<div class="t" style="left:1067.00px;top:705.20px;font-size:10.634px;font-weight:400;color:#242424;">27.10.2022 11:00</div>
<div class="t" style="left:1309.80px;top:705.36px;font-size:11.150px;font-weight:400;color:#242424;">Високий</div>
<div class="t" style="left:1553.30px;top:705.18px;font-size:10.661px;font-weight:400;color:#242424;">26.10.2022 17:40</div>
<div class="r" style="left:194px;top:725px;width:1619px;height:1px;background:#f0efee"></div>
<div class="t" style="left:218.50px;top:736.02px;font-size:10.368px;font-weight:400;color:#115ea3;">Створити таблицю</div>
<div class="t" style="left:556.20px;top:736.00px;font-size:10.400px;font-weight:400;color:#115ea3;letter-spacing:-0.267px;">SMART CRM Manager</div>
<div class="t" style="left:823.70px;top:736.28px;font-size:10.061px;font-weight:400;color:#115ea3;">2022-26-10 1010Y4S1</div>
<div class="t" style="left:1067.00px;top:735.30px;font-size:10.513px;font-weight:400;color:#242424;">13.04.2023 8:00</div>
<div class="t" style="left:1309.80px;top:735.35px;font-size:11.162px;font-weight:400;color:#242424;">Звичайний</div>
<div class="t" style="left:1553.30px;top:735.20px;font-size:10.634px;font-weight:400;color:#242424;">14.11.2022 10:19</div>
<div class="r" style="left:194px;top:755px;width:1619px;height:1px;background:#f0efee"></div>
<div class="t" style="left:218.50px;top:766.01px;font-size:10.384px;font-weight:400;color:#115ea3;">Підготувати КП</div>
<div class="t" style="left:556.20px;top:766.00px;font-size:10.400px;font-weight:400;color:#115ea3;letter-spacing:-0.216px;">SMART Trial Manager</div>
<div class="t" style="left:823.70px;top:766.01px;font-size:10.386px;font-weight:400;color:#115ea3;">2022-08-08 1002Q4N5</div>
<div class="t" style="left:1067.00px;top:765.28px;font-size:10.533px;font-weight:400;color:#242424;">08.08.2022 17:00</div>
<div class="t" style="left:1309.80px;top:765.35px;font-size:11.162px;font-weight:400;color:#242424;">Звичайний</div>
<div class="t" style="left:1553.30px;top:765.20px;font-size:10.634px;font-weight:400;color:#242424;">08.08.2022 11:56</div>
<div class="r" style="left:194px;top:785px;width:1619px;height:1px;background:#f0efee"></div>
<div class="t" style="left:218.50px;top:796.13px;font-size:10.248px;font-weight:400;color:#115ea3;">Замінити термінал</div>
<div class="t" style="left:556.20px;top:796.00px;font-size:10.400px;font-weight:400;color:#115ea3;letter-spacing:-0.216px;">SMART Trial Manager</div>
<div class="t" style="left:823.70px;top:796.04px;font-size:10.343px;font-weight:400;color:#115ea3;">C/080822/00001002</div>
<div class="t" style="left:1067.00px;top:795.28px;font-size:10.533px;font-weight:400;color:#242424;">30.08.2022 12:00</div>
<div class="t" style="left:1309.80px;top:795.35px;font-size:11.162px;font-weight:400;color:#242424;">Звичайний</div>
<div class="t" style="left:1553.30px;top:795.28px;font-size:10.533px;font-weight:400;color:#242424;">29.08.2022 13:45</div>
<div class="r" style="left:194px;top:815px;width:1619px;height:1px;background:#f0efee"></div>
<div class="r" style="left:1547px;top:696px;width:267px;height:30px;border:1px solid #605e5c;box-sizing:border-box"></div>
<div class="r" style="left:1876px;top:534px;width:5px;height:263px;background:#8a8a8a;border-radius:3px"></div>
<div class="r" style="left:0px;top:962px;width:1919px;height:1px;background:#aeb5c5"></div>
<div class="r" style="left:0px;top:963px;width:1919px;height:1px;background:#d8e4fa"></div>
</body></html>
